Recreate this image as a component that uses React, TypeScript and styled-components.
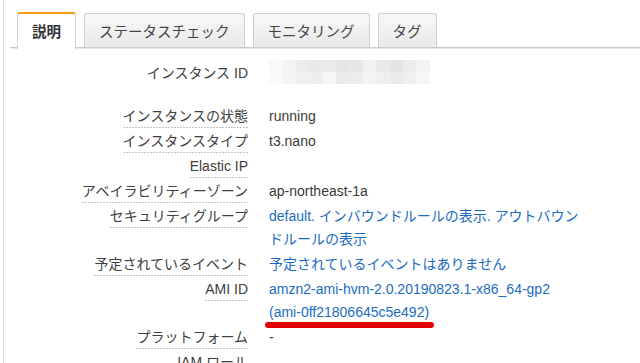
import styled, { createGlobalStyle } from "styled-components";

const GlobalStyle = createGlobalStyle`
  html, body {
    margin: 0;
    padding: 0;
    background: #fff;
    overflow: hidden;
  }
  body {
    font-family: "Liberation Sans", "Noto Sans CJK JP", sans-serif;
    color: #444;
  }
`;

const Panel = styled.div`
  height: 363px;
  margin-left: 3px;
  border-left: 1px solid #dcdcdc;
  padding-top: 12px;
  box-sizing: border-box;
`;

const TabBar = styled.div`
  display: flex;
  align-items: flex-end;
  gap: 8px;
  height: 35px;
  margin-left: 6px;
  padding-left: 7px;
  border-bottom: 1px solid #c9c9c9;
  box-shadow: 0 1px 0 #e8e8e8;
`;

const Tab = styled.div<{ $active?: boolean }>`
  display: flex;
  align-items: center;
  padding: 0 14px;
  box-sizing: border-box;
  font-size: 14.5px;
  font-family: "Noto Sans CJK JP", sans-serif;
  border: 1px solid #cfcfcf;
  border-bottom: none;
  border-radius: 3px 3px 0 0;
  color: #444;
  height: 34px;
  background: linear-gradient(#f8f8f8, #e9e9e9);
  ${(p) =>
    p.$active &&
    `
    height: 37px;
    margin-bottom: -2px;
    background: #fff;
    border-top: 2px solid #f79c12;
    font-weight: bold;
    color: #333;
    padding-bottom: 2px;
  `}
`;

const Details = styled.div`
  display: flex;
  flex-direction: column;
  padding-top: 13px;
  font-size: 14px;
`;

const Row = styled.div<{ $gap?: number }>`
  display: grid;
  grid-template-columns: 244px 316px;
  column-gap: 21px;
  padding: 1px 0;
  margin-bottom: ${(p) => p.$gap ?? 0}px;
`;

const LabelCell = styled.div`
  text-align: right;
`;

const Label = styled.span<{ $plain?: boolean }>`
  display: inline-block;
  line-height: 22px;
  color: #404040;
  padding-bottom: 1px;
  background: ${(p) =>
    p.$plain
      ? "none"
      : "linear-gradient(to right, #c4c4c4 60%, transparent 60%) left bottom / 3px 1px repeat-x"};
`;

const Value = styled.div`
  line-height: 23px;
  color: #3a3a3a;
  min-height: 23px;
`;

const Link = styled.a`
  color: #1b6cbf;
  text-decoration: none;
`;

const Marked = styled.span`
  position: relative;
  display: inline-block;
  &::after {
    content: "";
    position: absolute;
    left: -4px;
    right: -5px;
    top: 21px;
    height: 6px;
    border-radius: 3px;
    background: #e30000;
  }
`;

const blur = [
  ["#f9f9f9", "#f4f4f4", "#ececec", "#e9e9e9", "#ebebeb", "#e5e5e5", "#e6e6e6", "#f1f1f1", "#e8e8e8", "#e4e4e4", "#ececec", "#f3f3f3"],
  ["#fafafa", "#f5f5f5", "#efefef", "#ededed", "#f6f6f6", "#ebebeb", "#ececec", "#f4f4f4", "#eeeeee", "#ebebeb", "#efefef", "#f6f6f6"],
];

function BlurredId() {
  return (
    <svg width="161" height="24" viewBox="0 0 161 24" style={{ display: "block", marginTop: -2 }}>
      {blur.map((row, r) =>
        row.map((c, i) => (
          <rect key={`${r}-${i}`} x={i * 13.4} y={r * 12} width="13.5" height="12" fill={c} />
        ))
      )}
    </svg>
  );
}

const tabs = ["説明", "ステータスチェック", "モニタリング", "タグ"];

function App() {
  return (
    <>
      <GlobalStyle />
      <Panel>
        <TabBar>
          {tabs.map((t, i) => (
            <Tab key={t} $active={i === 0}>
              {t}
            </Tab>
          ))}
        </TabBar>
        <Details>
          <Row $gap={18}>
            <LabelCell>
              <Label $plain>インスタンス ID</Label>
            </LabelCell>
            <Value>
              <BlurredId />
            </Value>
          </Row>
          <Row>
            <LabelCell>
              <Label>インスタンスの状態</Label>
            </LabelCell>
            <Value>running</Value>
          </Row>
          <Row>
            <LabelCell>
              <Label>インスタンスタイプ</Label>
            </LabelCell>
            <Value>t3.nano</Value>
          </Row>
          <Row>
            <LabelCell>
              <Label>Elastic IP</Label>
            </LabelCell>
            <Value />
          </Row>
          <Row>
            <LabelCell>
              <Label>アベイラビリティーゾーン</Label>
            </LabelCell>
            <Value>ap-northeast-1a</Value>
          </Row>
          <Row>
            <LabelCell>
              <Label>セキュリティグループ</Label>
            </LabelCell>
            <Value>
              <Link>default. インバウンドルールの表示. アウトバウンドルールの表示</Link>
            </Value>
          </Row>
          <Row>
            <LabelCell>
              <Label>予定されているイベント</Label>
            </LabelCell>
            <Value>
              <Link>予定されているイベントはありません</Link>
            </Value>
          </Row>
          <Row>
            <LabelCell>
              <Label>AMI ID</Label>
            </LabelCell>
            <Value>
              <Link>
                amzn2-ami-hvm-2.0.20190823.1-x86_64-gp2{" "}
                <Marked>(ami-0ff21806645c5e492)</Marked>
              </Link>
            </Value>
          </Row>
          <Row>
            <LabelCell>
              <Label>プラットフォーム</Label>
            </LabelCell>
            <Value>-</Value>
          </Row>
          <Row>
            <LabelCell>
              <Label>IAM ロール</Label>
            </LabelCell>
            <Value />
          </Row>
        </Details>
      </Panel>
    </>
  );
}

export default App;
